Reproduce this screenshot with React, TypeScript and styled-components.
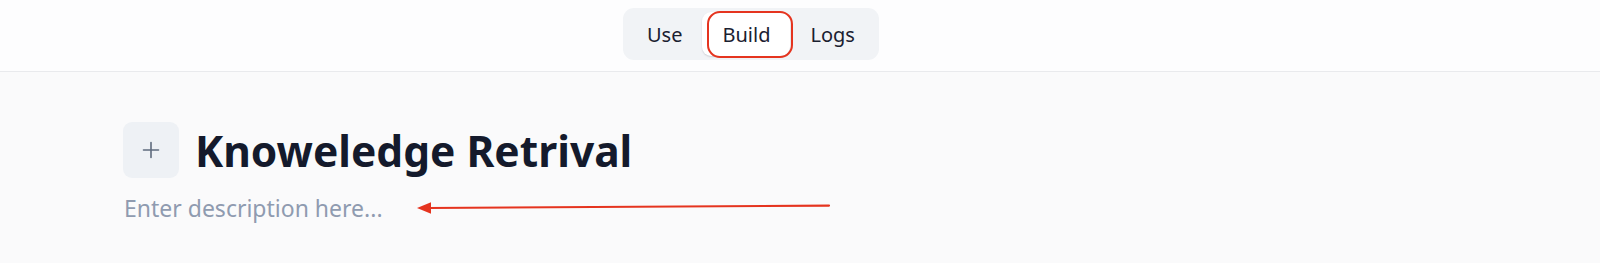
import React from "react";
import styled, { createGlobalStyle } from "styled-components";

const GlobalStyle = createGlobalStyle`
  html, body {
    margin: 0;
    padding: 0;
    background: #fafafb;
    font-family: "Noto Sans", "Open Sans", sans-serif;
  }
  * { box-sizing: border-box; }
`;

const Page = styled.div`
  width: 1600px;
  height: 263px;
  display: flex;
  flex-direction: column;
  background: #fafafb;
  overflow: hidden;
`;

const Header = styled.header`
  height: 72px;
  flex: none;
  display: flex;
  align-items: flex-start;
  padding: 8px 0 0 623px;
  background: #fdfdfe;
  border-bottom: 1px solid #e9eaed;
`;

const TabBar = styled.nav`
  display: flex;
  gap: 0;
  padding: 4px;
  height: 52px;
  border-radius: 11px;
  background: #f1f3f6;
`;

const Tab = styled.button<{ $active?: boolean }>`
  position: relative;
  height: 44px;
  padding: 0 20px;
  border: none;
  border-radius: 9px;
  background: ${(p) => (p.$active ? "#ffffff" : "transparent")};
  box-shadow: ${(p) =>
    p.$active ? "0 1px 2px rgba(15, 23, 42, 0.12), 0 1px 1px rgba(15,23,42,0.04)" : "none"};
  font-family: "Noto Sans", sans-serif;
  font-size: 20px;
  font-weight: 400;
  color: #1a2030;
  cursor: pointer;
`;

const Highlight = styled.span`
  position: absolute;
  left: 5px;
  right: -3px;
  top: -1px;
  bottom: -2px;
  border: 2px solid #e5341f;
  border-radius: 13px;
  pointer-events: none;
`;

const Main = styled.main`
  position: relative;
  flex: 1;
  padding: 50px 0 0 123px;
  display: flex;
  flex-direction: column;
`;

const TitleRow = styled.div`
  display: flex;
  align-items: center;
  gap: 16px;
`;

const IconBox = styled.button`
  width: 56px;
  height: 56px;
  flex: none;
  display: flex;
  align-items: center;
  justify-content: center;
  border: none;
  border-radius: 9px;
  background: #eef1f5;
  color: #5f6b7e;
  padding: 0;
`;

const Title = styled.h1`
  margin: 0;
  font-family: "Noto Sans", sans-serif;
  font-size: 42.5px;
  font-weight: 700;
  line-height: 1.2;
  color: #141a2c;
  letter-spacing: 0;
`;

const Description = styled.p`
  margin: 14px 0 0 1px;
  font-family: "Noto Sans", sans-serif;
  font-size: 23px;
  line-height: 32px;
  color: #8f9bb0;
`;

const Arrow = styled.svg`
  position: absolute;
  left: 410px;
  top: 126px;
  pointer-events: none;
`;

export default function App() {
  return (
    <>
      <GlobalStyle />
      <Page>
        <Header>
          <TabBar>
            <Tab>Use</Tab>
            <Tab $active>
              Build
              <Highlight />
            </Tab>
            <Tab>Logs</Tab>
          </TabBar>
        </Header>
        <Main>
          <TitleRow>
            <IconBox aria-label="Add icon">
              <svg width="18" height="18" viewBox="0 0 18 18" fill="none">
                <path d="M9 1.5v15M1.5 9h15" stroke="currentColor" strokeWidth="1.6" strokeLinecap="round" />
              </svg>
            </IconBox>
            <Title>Knoweledge Retrival</Title>
          </TitleRow>
          <Description>Enter description here...</Description>
          <Arrow width="425" height="20" viewBox="0 0 425 20">
            <path d="M419 7.6 L18 10" stroke="#e5341f" strokeWidth="2.2" strokeLinecap="round" />
            <path d="M7 10.1 L21 4.2 L21 15.8 Z" fill="#e5341f" />
          </Arrow>
        </Main>
      </Page>
    </>
  );
}
